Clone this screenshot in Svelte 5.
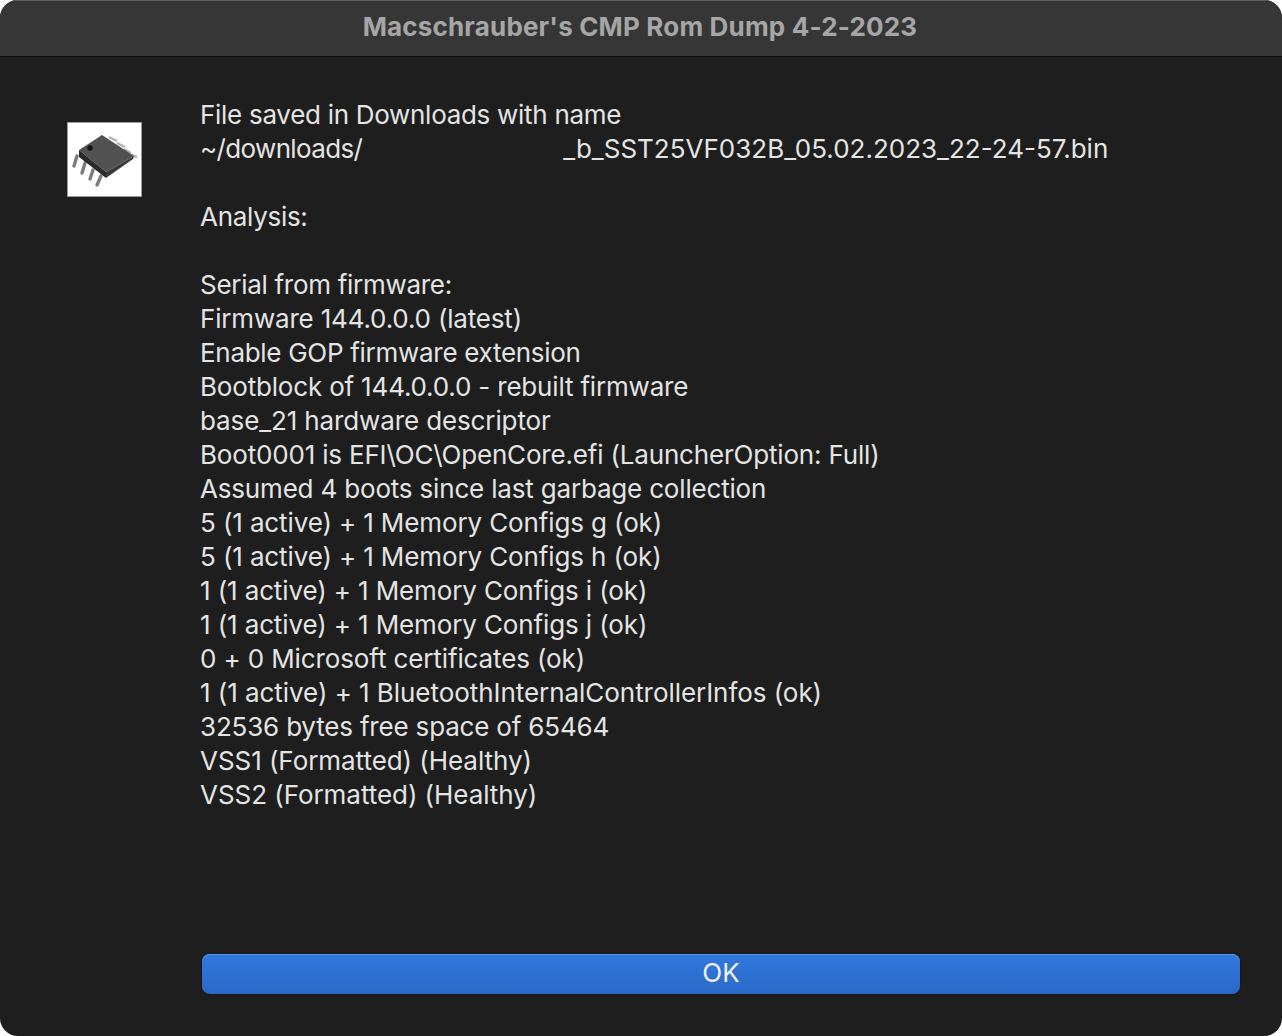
<script>
  const lines = [
    ['Serial from firmware:', 'tight'],
    ['Firmware 144.0.0.0 (latest)', 'mid'],
    ['Enable GOP firmware extension', 'tight'],
    ['Bootblock of 144.0.0.0 - rebuilt firmware', 'mid'],
    ['base_21 hardware descriptor', 'loose'],
    ['Boot0001 is EFI\\OC\\OpenCore.efi (LauncherOption: Full)', 'mid'],
    ['Assumed 4 boots since last garbage collection', 'mid'],
    ['5 (1 active) + 1 Memory Configs g (ok)', 'loose'],
    ['5 (1 active) + 1 Memory Configs h (ok)', 'loose'],
    ['1 (1 active) + 1 Memory Configs i (ok)', 'loose'],
    ['1 (1 active) + 1 Memory Configs j (ok)', 'loose'],
    ['0 + 0 Microsoft certificates (ok)', 'loose'],
    ['1 (1 active) + 1 BluetoothInternalControllerInfos (ok)', 'plain'],
    ['32536 bytes free space of 65464', 'mid'],
    ['VSS1 (Formatted) (Healthy)', 'plain'],
    ['VSS2 (Formatted) (Healthy)', 'plain']
  ];
</script>

<div class="window">
  <header class="titlebar"><span class="title">Macschrauber's CMP Rom Dump 4-2-2023</span></header>
  <main class="body">
    <div class="icon">
      <svg width="75" height="75" viewBox="0 0 75 75">
        <rect x="0.5" y="0.5" width="74" height="74" fill="#fff" stroke="#9a9a9a" />
        <g stroke="#b4b4b4" stroke-width="2.4" fill="none">
          <path d="M42 15 L50 19" />
          <path d="M50 21 L58 25" />
          <path d="M57 27 L64 31" />
          <path d="M64 33 L70 35" />
        </g>
        <g stroke="#7c7c7c" stroke-width="3.4" fill="none" stroke-linecap="round">
          <path d="M10 34 L7 44" />
          <path d="M18 41 L15 51" />
          <path d="M26 48 L23 57" />
          <path d="M34 54 L30 63" />
        </g>
        <path d="M12 28 L35 13 L67 34 L39 50 Z" fill="#525252" />
        <path d="M12 28 L39 50 L39 56 L12 35 Z" fill="#2a2a2a" />
        <path d="M39 50 L67 34 L66 37 L39 56 Z" fill="#3a3a3a" />
        <circle cx="23" cy="26" r="2.7" fill="#141414" />
      </svg>
    </div>
    <div class="message">
      <div class="tight">File saved in Downloads with name</div>
      <div class="path"><span class="dir">~/downloads/</span><span class="redacted"></span><span>_b_SST25VF032B_05.02.2023_22-24-57.bin</span></div>
      <div class="blank"></div>
      <div class="tight">Analysis:</div>
      <div class="blank"></div>
      {#each lines as [text, spacing]}
        <div class={spacing}>{text}</div>
      {/each}
    </div>
  </main>
  <footer class="actions">
    <button class="ok">OK</button>
  </footer>
</div>

<style>
  :global(body) {
    margin: 0;
    background: #fff;
  }
  .window {
    width: 1282px;
    height: 1036px;
    display: flex;
    flex-direction: column;
    background: #1e1e1e;
    border-radius: 18px;
    overflow: hidden;
    font-family: Inter, "Liberation Sans", sans-serif;
    color: #e4e4e4;
  }
  .titlebar {
    flex: none;
    box-sizing: border-box;
    border-top: 1px solid #5e5e5e;
    border-bottom: 1px solid #0c0c0c;
    height: 57px;
    padding: 0 2px 4px 0;
    background: #363636;
    color: #a6a6a6;
    display: flex;
    align-items: center;
    justify-content: center;
  }
  .title {
    font-size: 26px;
    font-weight: 700;
    letter-spacing: 0.17px;
  }
  .body {
    flex: 1;
    display: flex;
    padding: 41px 0 0 67px;
    min-height: 0;
  }
  .icon {
    width: 75px;
    height: 75px;
    margin-top: 24px;
    margin-right: 58px;
    flex: none;
  }
  .icon svg {
    display: block;
  }
  .message {
    font-size: 26px;
    line-height: 34px;
    white-space: nowrap;
  }
  .tight {
    letter-spacing: -0.29px;
  }
  .mid {
    letter-spacing: -0.18px;
  }
  .loose {
    letter-spacing: -0.12px;
  }
  .plain {
    letter-spacing: -0.05px;
  }
  .dir {
    letter-spacing: -0.65px;
  }
  .blank {
    height: 34px;
  }
  .redacted {
    display: inline-block;
    width: 201px;
  }
  .actions {
    flex: none;
    padding: 0 42px 42px 202px;
  }
  .ok {
    display: block;
    width: 100%;
    height: 40px;
    padding: 0 0 4px;
    border: 0;
    border-radius: 8px;
    background: linear-gradient(#3178de, #2a69c8);
    box-shadow: inset 0 1px 0 #5c93e6, 0 0 2px rgba(0, 0, 0, 0.5);
    color: #f0f0f0;
    font: 26px Inter, "Liberation Sans", sans-serif;
  }
</style>
